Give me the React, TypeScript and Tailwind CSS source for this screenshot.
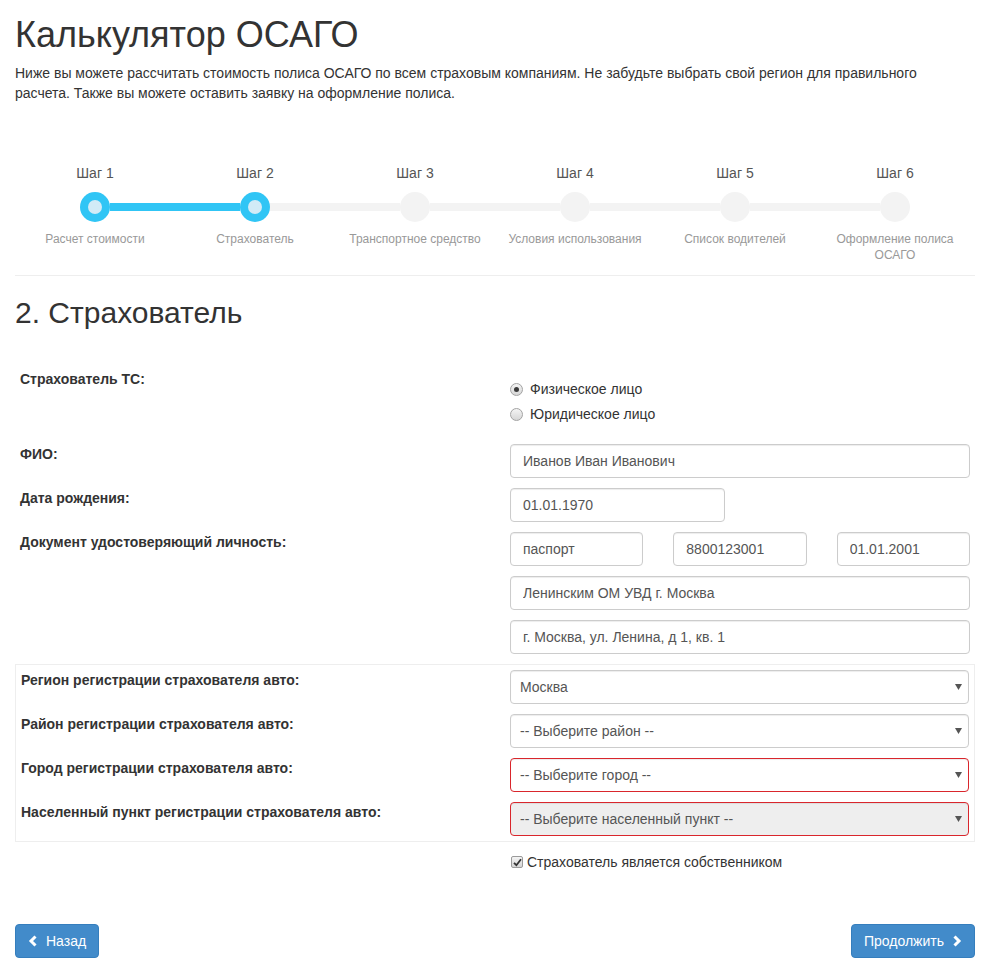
import React from 'react';

const steps = [
    { n: 1, label: 'Расчет стоимости' },
    { n: 2, label: 'Страхователь' },
    { n: 3, label: 'Транспортное средство' },
    { n: 4, label: 'Условия использования' },
    { n: 5, label: 'Список водителей' },
    { n: 6, label: 'Оформление полиса ОСАГО' },
];
const active = 2;

const inputCls = "block w-full h-[34px] px-[12px] text-[14px] text-[#555] bg-white border border-[#ccc] rounded-[4px] shadow-[inset_0_1px_1px_rgba(0,0,0,0.075)] outline-none";

const Chevron = ({ dir }: { dir: 'left' | 'right' }) => (
    <svg width="11" height="12" viewBox="0 0 11 12" aria-hidden="true">
        {dir === 'left'
            ? <path d="M7.5 1.5 L3 6 L7.5 10.5" fill="none" stroke="white" strokeWidth="3" strokeLinejoin="miter" />
            : <path d="M3.5 1.5 L8 6 L3.5 10.5" fill="none" stroke="white" strokeWidth="3" strokeLinejoin="miter" />}
    </svg>
);

const Radio = ({ checked, label }: { checked?: boolean; label: string }) => (
    <label className="flex items-center gap-[7px] leading-[20px] text-[14px] text-[#333]">
        <span className="w-[13px] h-[13px] rounded-full border border-[#a3a3a3] bg-gradient-to-b from-[#f4f4f4] to-[#d6d6d6] flex items-center justify-center">
            {checked && <span className="w-[5px] h-[5px] rounded-full bg-[#3a3a3a]" />}
        </span>
        {label}
    </label>
);

const Select = ({ value, error, disabled }: { value: string; error?: boolean; disabled?: boolean }) => (
    <div className="relative">
        <select
            defaultValue={value}
            className={`block w-full h-[34px] pl-[9px] pr-[24px] text-[14px] text-[#555] rounded-[4px] border appearance-none outline-none shadow-[inset_0_1px_1px_rgba(0,0,0,0.075)] ${error ? 'border-[#d9262c]' : 'border-[#ccc]'} ${disabled ? 'bg-[#eee]' : 'bg-white'}`}
        >
            <option value={value}>{value}</option>
        </select>
        <svg className="absolute right-[7px] top-[14px] pointer-events-none" width="7" height="6" viewBox="0 0 7 6">
            <path d="M0 0 H7 L3.5 6 Z" fill="#555" />
        </svg>
    </div>
);

export default function App() {
    return (
        <div className="w-[960px] ml-[15px] pb-[19px] text-[#333]" style={{ fontFamily: '"Liberation Sans", Arial, sans-serif' }}>
            <h1 className="mt-[15px] text-[36px] leading-[40px] text-[#333]">Калькулятор ОСАГО</h1>
            <p className="mt-[8px] text-[14px] leading-[20px] text-[#333]">
                Ниже вы можете рассчитать стоимость полиса ОСАГО по всем страховым компаниям. Не забудьте выбрать свой регион для правильного расчета. Также вы можете оставить заявку на оформление полиса.
            </p>

            {/* Stepper */}
            <div className="mt-[60px] flex">
                {steps.map((s) => {
                    const done = s.n <= active;
                    const leftOn = s.n <= active;
                    const rightOn = s.n < active;
                    return (
                        <div key={s.n} className="w-[160px] flex flex-col items-center">
                            <div className="text-[14px] leading-[20px] text-[#555]">Шаг {s.n}</div>
                            <div className="mt-[9px] w-full flex items-center h-[30px]">
                                <div className={`flex-1 h-[8px] ${s.n === 1 ? 'bg-transparent' : leftOn ? 'bg-[#30c5f5]' : 'bg-[#f3f3f3]'}`} />
                                <div className={`w-[30px] h-[30px] rounded-full flex items-center justify-center ${done ? 'bg-[#30c5f5]' : 'bg-[#f3f3f3]'}`}>
                                    {done && <div className="w-[14px] h-[14px] rounded-full bg-[#d1ebf7]" />}
                                </div>
                                <div className={`flex-1 h-[8px] ${s.n === 6 ? 'bg-transparent' : rightOn ? 'bg-[#30c5f5]' : 'bg-[#f3f3f3]'}`} />
                            </div>
                            <div className="mt-[9px] px-[5px] text-center text-[12px] leading-[16px] text-[#999]">{s.label}</div>
                        </div>
                    );
                })}
            </div>
            <hr className="mt-[12px] border-0 border-t border-[#eee]" />

            <h2 className="mt-[20px] text-[30px] leading-[33px] text-[#333]">2. Страхователь</h2>

            {/* Form */}
            <div className="mt-[40px] px-[5px] text-[14px]">
                <div className="grid grid-cols-[490px_460px]">
                    <div className="font-bold leading-[20px]">Страхователь ТС:</div>
                    <div className="pt-[10px] flex flex-col gap-[5px]">
                        <Radio checked label="Физическое лицо" />
                        <Radio label="Юридическое лицо" />
                    </div>
                </div>

                <div className="mt-[20px] grid grid-cols-[490px_460px]">
                    <div className="font-bold leading-[20px]">ФИО:</div>
                    <input className={inputCls} defaultValue="Иванов Иван Иванович" />
                </div>

                <div className="mt-[10px] grid grid-cols-[490px_460px]">
                    <div className="font-bold leading-[20px]">Дата рождения:</div>
                    <div className="w-[215px]">
                        <input className={inputCls} defaultValue="01.01.1970" />
                    </div>
                </div>

                <div className="mt-[10px] grid grid-cols-[490px_460px]">
                    <div className="font-bold leading-[20px]">Документ удостоверяющий личность:</div>
                    <div className="flex flex-col gap-[10px]">
                        <div className="grid grid-cols-3 gap-[30px]">
                            <input className={inputCls} defaultValue="паспорт" />
                            <input className={inputCls} defaultValue="8800123001" />
                            <input className={inputCls} defaultValue="01.01.2001" />
                        </div>
                        <input className={inputCls} defaultValue="Ленинским ОМ УВД г. Москва" />
                        <input className={inputCls} defaultValue="г. Москва, ул. Ленина, д 1, кв. 1" />
                    </div>
                </div>
            </div>

            <div className="mt-[10px] border border-[#eee] p-[5px] flex flex-col gap-[10px] text-[14px]">
                <div className="grid grid-cols-[489px_1fr]">
                    <div className="font-bold leading-[20px]">Регион регистрации страхователя авто:</div>
                    <Select value="Москва" />
                </div>
                <div className="grid grid-cols-[489px_1fr]">
                    <div className="font-bold leading-[20px]">Район регистрации страхователя авто:</div>
                    <Select value="-- Выберите район --" />
                </div>
                <div className="grid grid-cols-[489px_1fr]">
                    <div className="font-bold leading-[20px]">Город регистрации страхователя авто:</div>
                    <Select value="-- Выберите город --" error />
                </div>
                <div className="grid grid-cols-[489px_1fr]">
                    <div className="font-bold leading-[20px]">Населенный пункт регистрации страхователя авто:</div>
                    <Select value="-- Выберите населенный пункт --" error disabled />
                </div>
            </div>

            <div className="mt-[10px] pl-[496px] flex items-center gap-[4px] text-[14px] leading-[20px] text-[#333]">
                <span className="w-[12px] h-[12px] rounded-[2px] border border-[#9a9a9a] bg-gradient-to-b from-[#f4f4f4] to-[#d4d4d4] flex items-center justify-center">
                    <svg width="9" height="9" viewBox="0 0 9 9">
                        <path d="M1 4.8 L3.4 7.2 L8 1.2" fill="none" stroke="#333" strokeWidth="1.8" />
                    </svg>
                </span>
                Страхователь является собственником
            </div>

            <div className="mt-[52px] flex justify-between">
                <button type="button" className="h-[34px] px-[12px] flex items-center gap-[7px] text-[14px] text-white bg-[#428bca] border border-[#357ebd] rounded-[4px]">
                    <Chevron dir="left" />
                    Назад
                </button>
                <button type="button" className="h-[34px] px-[12px] flex items-center gap-[7px] text-[14px] text-white bg-[#428bca] border border-[#357ebd] rounded-[4px]">
                    Продолжить
                    <Chevron dir="right" />
                </button>
            </div>
        </div>
    );
}
